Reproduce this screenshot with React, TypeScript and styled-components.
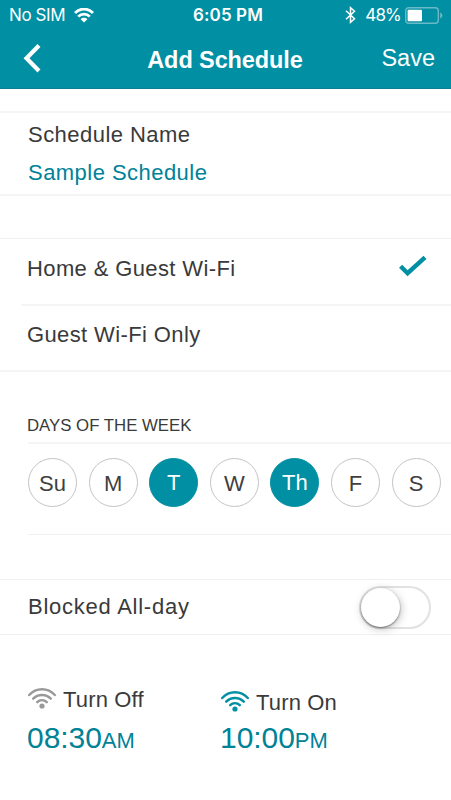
import React, { useState } from "react";
import styled, { createGlobalStyle } from "styled-components";

const teal = "#008fa3";
const tealText = "#008297";

const GlobalStyle = createGlobalStyle`
  * { box-sizing: border-box; }
  body { margin: 0; background: #fff; font-family: "Liberation Sans", Arial, sans-serif; }
  button { border: 0; padding: 0; background: none; font-family: inherit; cursor: pointer; }
`;

const Screen = styled.main`
  width: 451px;
  height: 800px;
  overflow: hidden;
  background: #fff;
  color: #3a3a3a;
`;

const Header = styled.header`
  height: 89px;
  background: ${teal};
  border-bottom: 1px solid #087f92;
  color: #fff;
`;

const StatusBar = styled.div`
  display: grid;
  grid-template-columns: 1fr auto 1fr;
  align-items: center;
  height: 30px;
  padding: 0 8px 0 9px;
  font-family: Inter, sans-serif;
  font-size: 17px;
  line-height: 30px;
`;

const StatusGroup = styled.div<{ $end?: boolean }>`
  display: flex;
  align-items: center;
  justify-content: ${(p) => (p.$end ? "flex-end" : "flex-start")};
`;

const Carrier = styled.span`
  margin-right: 9px;
  letter-spacing: -0.4px;
`;

const Clock = styled.span`
  padding-left: 4px;
  font-weight: 600;
  letter-spacing: 0.1px;
`;

const Percent = styled.span`
  margin: 0 4px 0 9px;
  letter-spacing: -0.8px;
`;

const NavBar = styled.nav`
  display: grid;
  grid-template-columns: 92px 1fr 100px;
  height: 58px;
  padding: 0 16px 0 23px;
`;

const BackButton = styled.button`
  display: flex;
  align-items: flex-start;
  padding-top: 13px;
`;

const Title = styled.h1`
  margin: 0;
  text-align: center;
  font-size: 23.5px;
  line-height: 60px;
  letter-spacing: -0.1px;
  white-space: nowrap;
`;

const SaveButton = styled.button`
  height: 56px;
  color: #fff;
  font-size: 23.5px;
  line-height: 56px;
  text-align: right;
`;

const Rule = styled.hr<{ $inset?: number; $thin?: boolean }>`
  height: ${(p) => (p.$thin ? 1 : 2)}px;
  margin: 0 0 0 ${(p) => p.$inset ?? 0}px;
  border: 0;
  background: ${(p) => (p.$thin ? "#f0f0f0" : "#f5f5f5")};
`;

const Gap = styled.div<{ $h: number }>`
  height: ${(p) => p.$h}px;
`;

const NameField = styled.section`
  height: 81px;
  padding: 3px 28px 0;
  font-size: 22px;
  line-height: 38px;
  letter-spacing: 0.46px;
`;

const FieldValue = styled.div`
  color: ${tealText};
`;

const OptionRow = styled.button<{ $h: number; $line: number }>`
  display: flex;
  justify-content: space-between;
  align-items: flex-start;
  width: 100%;
  height: ${(p) => p.$h}px;
  padding: 0 24px 0 27px;
  color: #3a3a3a;
  font-size: 22px;
  line-height: ${(p) => p.$line}px;
  letter-spacing: 0.38px;
  text-align: left;

  svg { margin-top: 16px; }
`;

const SectionLabel = styled.h2`
  height: 70px;
  margin: 0;
  padding: 44px 27px 0;
  font-size: 16.8px;
  font-weight: 400;
  line-height: 20px;
`;

const DayList = styled.div`
  display: grid;
  grid-template-columns: repeat(7, 49px);
  column-gap: 11.6px;
  height: 90px;
  padding: 14px 0 0 28px;
`;

const Day = styled.button<{ $on: boolean }>`
  height: 49px;
  border: 1px solid ${(p) => (p.$on ? teal : "#c4c4c4")};
  border-radius: 50%;
  background: ${(p) => (p.$on ? teal : "#fff")};
  color: ${(p) => (p.$on ? "#fff" : "#404040")};
  font-size: 22px;
  line-height: ${(p) => (p.$on ? 47 : 49)}px;
`;

const ToggleRow = styled.section`
  display: flex;
  justify-content: space-between;
  height: 54px;
  padding: 0 20px 0 28px;
  font-size: 22px;
  line-height: 53px;
  letter-spacing: 0.75px;
`;

const Switch = styled.button<{ $on: boolean }>`
  display: flex;
  justify-content: ${(p) => (p.$on ? "flex-end" : "flex-start")};
  width: 72px;
  height: 43px;
  margin-top: 6px;
  padding: 0;
  border: 2px solid #e2e2e2;
  border-radius: 22px;
  background: ${(p) => (p.$on ? teal : "#fff")};
`;

const Knob = styled.span`
  width: 39px;
  height: 39px;
  border-radius: 50%;
  background: #fff;
  box-shadow: 0 1px 2px rgba(0, 0, 0, 0.45), 1px 2px 8px rgba(0, 0, 0, 0.25);
`;

const Times = styled.section`
  display: grid;
  grid-template-columns: 193px 1fr;
  padding: 48px 0 0 27px;
`;

const TimeHeading = styled.div<{ $drop: number }>`
  display: flex;
  align-items: flex-start;
  gap: 7px;
  height: 38px;
  padding-top: ${(p) => p.$drop}px;
  font-size: 22px;
  line-height: 33px;
  letter-spacing: 0.15px;
  white-space: nowrap;

  svg { margin-top: 4px; }
`;

const TimeValue = styled.div`
  color: ${tealText};
  font-size: 30px;
  line-height: 34px;
  letter-spacing: -0.05px;
`;

const Meridiem = styled.span`
  font-size: 22px;
`;

const StatusWifi = () => (
  <svg width="20" height="15" viewBox="0 0 20 15" fill="none" stroke="#fff" strokeWidth="2.8">
    <path d="M1 5C6-.3 14-.3 19 5" />
    <path d="M4.2 8.6c3.2-3.3 8.4-3.3 11.6 0" />
    <path d="M6.6 11.2c1.9-1.8 4.9-1.8 6.8 0L10 14.4z" fill="#fff" stroke="none" />
  </svg>
);

const Bluetooth = () => (
  <svg width="11" height="18" viewBox="0 0 11 18" fill="none" stroke="#fff" strokeWidth="1.5">
    <path d="M1 4.8l8.5 8L5.5 16.3V1.7l4 3.5L1 13.2" />
  </svg>
);

const Battery = () => (
  <svg width="38" height="17" viewBox="0 0 38 17">
    <rect x=".7" y=".7" width="32.6" height="15.6" rx="3" fill="none" stroke="#69bac6" strokeWidth="1.4" />
    <rect x="2.6" y="2.8" width="14.4" height="11.4" rx="1" fill="#fff" />
    <path d="M35.2 5.6q2.2 1 2.2 2.9t-2.2 2.9z" fill="#69bac6" />
  </svg>
);

const SignalWifi = ({ color }: { color: string }) => (
  <svg width="29" height="22" viewBox="0 0 29 22" fill="none" stroke={color} strokeWidth="2.4" strokeLinecap="round">
    <path d="M2.2 8C9.2.4 20.8.4 27.8 8" />
    <path d="M6.2 11.7c4.8-5 12.8-5 17.6 0" />
    <path d="M10.2 15.2c2.7-2.8 6.9-2.8 9.6 0" />
    <circle cx="15" cy="19" r="2.6" fill={color} stroke="none" />
  </svg>
);

const dayNames = ["Su", "M", "T", "W", "Th", "F", "S"];

export default function App() {
  const [guestOnly, setGuestOnly] = useState(false);
  const [days, setDays] = useState(["T", "Th"]);
  const [blocked, setBlocked] = useState(false);

  const toggleDay = (day: string) =>
    setDays((prev) => (prev.includes(day) ? prev.filter((d) => d !== day) : [...prev, day]));

  const check = (
    <svg width="28" height="24" viewBox="0 0 28 24" fill="none" stroke={teal} strokeWidth="4.4">
      <path d="M1.6 11.2l7 7L26 2.3" />
    </svg>
  );

  return (
    <>
      <GlobalStyle />
      <Screen>
        <Header>
          <StatusBar>
            <StatusGroup>
              <Carrier>No SIM</Carrier>
              <StatusWifi />
            </StatusGroup>
            <Clock>6:05 PM</Clock>
            <StatusGroup $end>
              <Bluetooth />
              <Percent>48%</Percent>
              <Battery />
            </StatusGroup>
          </StatusBar>
          <NavBar>
            <BackButton aria-label="Back">
              <svg width="19" height="30" viewBox="0 0 19 30" fill="none" stroke="#fff" strokeWidth="4.2">
                <path d="M16 2.5L3.5 15.2 16 28" />
              </svg>
            </BackButton>
            <Title>Add Schedule</Title>
            <SaveButton>Save</SaveButton>
          </NavBar>
        </Header>

        <Gap $h={22} />
        <Rule />
        <NameField>
          <div>Schedule Name</div>
          <FieldValue>Sample Schedule</FieldValue>
        </NameField>
        <Rule />
        <Gap $h={42} />
        <Rule $thin />
        <OptionRow $h={65} $line={59} onClick={() => setGuestOnly(false)}>
          Home &amp; Guest Wi-Fi
          {!guestOnly && check}
        </OptionRow>
        <Rule $inset={21} />
        <OptionRow $h={64} $line={57} onClick={() => setGuestOnly(true)}>
          Guest Wi-Fi Only
          {guestOnly && check}
        </OptionRow>
        <Rule />
        <SectionLabel>DAYS OF THE WEEK</SectionLabel>
        <Rule $inset={28} />
        <DayList>
          {dayNames.map((day) => (
            <Day key={day} $on={days.includes(day)} onClick={() => toggleDay(day)}>
              {day}
            </Day>
          ))}
        </DayList>
        <Rule $inset={28} $thin />
        <Gap $h={44} />
        <Rule $thin />
        <ToggleRow>
          Blocked All-day
          <Switch $on={blocked} aria-label="Blocked All-day" onClick={() => setBlocked(!blocked)}>
            <Knob />
          </Switch>
        </ToggleRow>
        <Rule $thin />
        <Times>
          <div>
            <TimeHeading $drop={0}>
              <SignalWifi color="#999" />
              Turn Off
            </TimeHeading>
            <TimeValue>
              08:30<Meridiem>AM</Meridiem>
            </TimeValue>
          </div>
          <div>
            <TimeHeading $drop={3}>
              <SignalWifi color={teal} />
              Turn On
            </TimeHeading>
            <TimeValue>
              10:00<Meridiem>PM</Meridiem>
            </TimeValue>
          </div>
        </Times>
      </Screen>
    </>
  );
}
